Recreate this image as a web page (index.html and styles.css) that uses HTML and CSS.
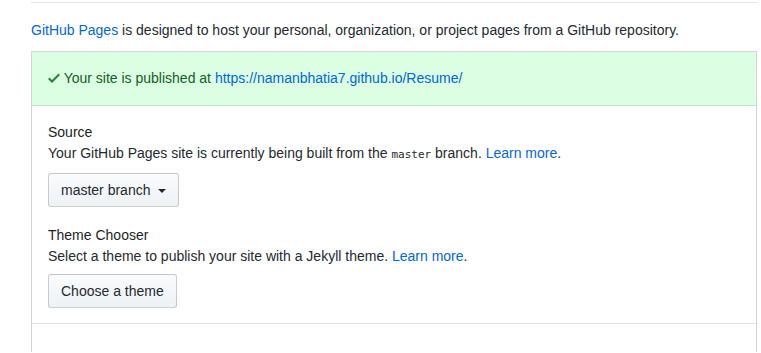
FILE: index.html
```html
<!DOCTYPE html>
<html lang="en">
<head>
    <meta charset="UTF-8">
    <title>GitHub Pages</title>
    <link rel="stylesheet" href="styles.css">
</head>
<body>

<div class="settings">
    <div class="rule"></div>

    <p class="intro"><a href="#">GitHub Pages</a> is designed to host your personal, organization, or project pages from a GitHub repository.</p>

    <div class="box">
        <div class="flash">
            <svg class="check" width="12" height="16" viewBox="0 0 12 16"><path d="M12 5l-8 8-4-4 1.5-1.5L4 10l6.5-6.5L12 5z"/></svg>
            Your site is published at <a href="#">https://namanbhatia7.github.io/Resume/</a>
        </div>

        <div class="box-row">
            <div class="group">
                <h4>Source</h4>
                <p>Your GitHub Pages site is currently being built from the <code>master</code> branch. <a href="#">Learn more</a>.</p>
                <button class="btn">master branch <span class="caret"></span></button>
            </div>

            <div class="group">
                <h4>Theme Chooser</h4>
                <p>Select a theme to publish your site with a Jekyll theme. <a href="#">Learn more</a>.</p>
                <button class="btn">Choose a theme</button>
            </div>
        </div>

        <div class="box-row empty"></div>
    </div>
</div>

</body>
</html>
```

FILE: styles.css
```css
body {
    margin: 0;
    font-family: "Liberation Sans", Arial, sans-serif;
    font-size: 14px;
    line-height: 21px;
    color: #24292e;
    background-color: white;
}

a {
    color: #0366d6;
    text-decoration: none;
}

.settings {
    margin-left: 31px;
    width: 726px;
}

.rule {
    height: 2px;
    border-bottom: 1px solid #e1e4e8;
}

.intro {
    margin: 17px 0 10px;
}

.box {
    border: 1px solid #d1d5da;
    border-bottom: none;
}

/* Zelena vrstica */
.flash {
    padding: 16px;
    background-color: #dcffe4;
    border-bottom: 1px solid #bfe5c9;
    color: #165c26;
}

.check {
    fill: #22863a;
    vertical-align: -3px;
}

.box-row {
    padding: 16px 16px 15px;
    border-bottom: 1px solid #e1e4e8;
}

.box-row.empty {
    height: 28px;
    padding: 0;
    border-bottom: none;
}

.group + .group {
    margin-top: 18px;
}

.group + .group .btn {
    margin-top: 7px;
}

h4 {
    margin: 0;
    font-size: 14px;
    font-weight: normal;
    color: #1b1f23;
}

.group p {
    margin: 0;
}

code {
    font-family: "DejaVu Sans Mono", monospace;
    font-size: 11px;
}

.btn {
    margin-top: 8px;
    padding: 6px 12px;
    font-family: inherit;
    font-size: 14px;
    line-height: 20px;
    color: #24292e;
    background-image: linear-gradient(-180deg, #fafbfc 0%, #eff3f6 90%);
    border: 1px solid rgba(27, 31, 35, 0.2);
    border-radius: 3px;
    cursor: pointer;
}

.caret {
    display: inline-block;
    margin-left: 4px;
    vertical-align: middle;
    border: 4px solid transparent;
    border-top-color: #24292e;
    border-bottom: none;
}
```
